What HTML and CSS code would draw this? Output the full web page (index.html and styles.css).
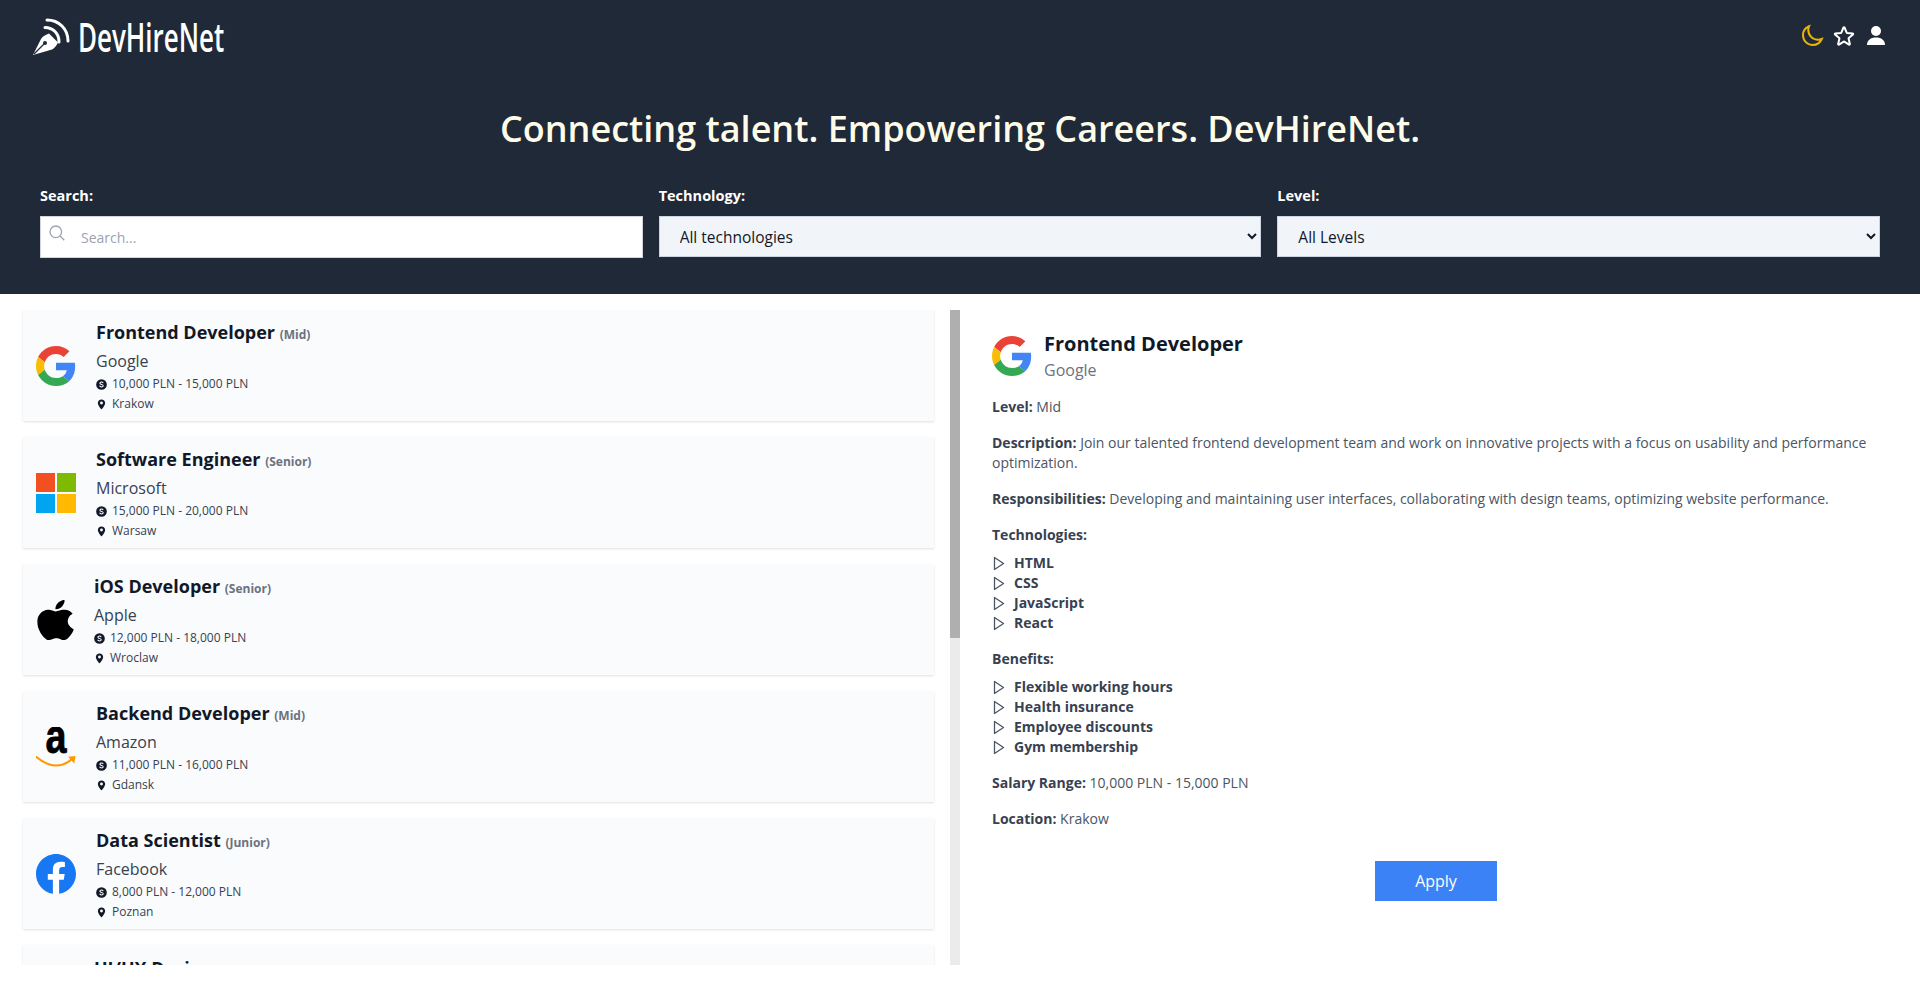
FILE: index.html
```html
<!DOCTYPE html>
<html lang="en">
<head>
    <meta charset="UTF-8">
    <title>DevHireNet</title>
    <link rel="stylesheet" href="styles.css">
</head>
<body>
    <svg class="sprites" width="0" height="0">
        <symbol id="g-logo" viewBox="0 0 48 48">
            <path fill="#EA4335" d="M24 9.5c3.54 0 6.71 1.22 9.21 3.6l6.85-6.85C35.9 2.38 30.47 0 24 0 14.62 0 6.51 5.38 2.56 13.22l7.98 6.19C12.43 13.72 17.74 9.5 24 9.5z"/>
            <path fill="#4285F4" d="M46.98 24.55c0-1.57-.15-3.09-.38-4.55H24v9.02h12.94c-.58 2.96-2.26 5.48-4.78 7.18l7.73 6c4.51-4.18 7.09-10.36 7.09-17.65z"/>
            <path fill="#FBBC05" d="M10.53 28.59c-.48-1.45-.76-2.99-.76-4.59s.27-3.14.76-4.59l-7.98-6.19C.92 16.46 0 20.12 0 24c0 3.88.92 7.54 2.56 10.78l7.97-6.19z"/>
            <path fill="#34A853" d="M24 48c6.48 0 11.93-2.13 15.89-5.81l-7.73-6c-2.15 1.45-4.92 2.3-8.16 2.3-6.26 0-11.57-4.22-13.47-9.91l-7.98 6.19C6.51 42.62 14.62 48 24 48z"/>
        </symbol>
        <symbol id="dollar" viewBox="0 0 12 12">
            <circle cx="6" cy="6" r="5.8" fill="#111827"/>
            <path d="M7.9 4.5C7.5 3.700 6.800 3.400 6 3.400c-1 0-1.800.5-1.800 1.300 0 1.700 3.700.8 3.700 2.600 0 .8-.9 1.300-1.900 1.300-.9 0-1.700-.4-2.100-1.200" fill="none" stroke="#fff" stroke-width="1.100"/>
        </symbol>
        <symbol id="pin" viewBox="0 0 12 12">
            <path fill="#111827" fill-rule="evenodd" d="M6 .5C3.700.5 2 2.200 2 4.400 2 7.200 6 11.500 6 11.500s4-4.300 4-7.100C10 2.200 8.300.5 6 .5zm0 5.500a1.600 1.600 0 1 1 0-3.200 1.600 1.600 0 0 1 0 3.200z"/>
        </symbol>
        <symbol id="arrow" viewBox="0 0 13 15">
            <path d="M2.500 1.500 11.500 7.500 2.500 13.500z" fill="none" stroke="#4b5563" stroke-width="1.300" stroke-linejoin="round"/>
        </symbol>
    </svg>

    <header class="header">
        <div class="topbar">
            <a class="brand" href="#">
                <svg class="brand-icon" viewBox="0 0 38 38">
                    <path fill="#fff" d="M1 38 9 22c1-2 4-4 8-5.500l9 9c-1.500 3.500-3.500 5.500-6 7z"/>
                    <path fill="none" stroke="#1f2937" stroke-width="1.200" d="M2 37 12 27"/>
                    <circle cx="13" cy="26" r="2" fill="#1f2937"/>
                    <path fill="none" stroke="#fff" stroke-width="3" stroke-linecap="round" d="M13 10.500c8 0 14 6 14 14.500"/>
                    <path fill="none" stroke="#fff" stroke-width="3" stroke-linecap="round" d="M15 3c12 0 21 9 21 21"/>
                </svg>
                <span class="brand-name">DevHireNet</span>
            </a>
            <div class="top-icons">
                <svg class="icon-moon" viewBox="0 0 24 24"><path d="M21.752 15.002A9.718 9.718 0 0118 15.750c-5.385 0-9.750-4.365-9.750-9.750 0-1.330.266-2.597.748-3.752A9.753 9.753 0 003 11.250C3 16.635 7.365 21 12.750 21a9.753 9.753 0 009.002-5.998z"/></svg>
                <svg class="icon-star" viewBox="0 0 24 24"><path d="M11.480 3.499a.562.562 0 011.040 0l2.125 5.111a.563.563 0 00.475.345l5.518.442c.499.040.701.663.321.988l-4.204 3.602a.563.563 0 00-.182.557l1.285 5.385a.562.562 0 01-.840.610l-4.725-2.885a.562.562 0 00-.586 0L6.982 20.540a.562.562 0 01-.840-.610l1.285-5.386a.562.562 0 00-.182-.557l-4.204-3.602a.563.563 0 01.321-.988l5.518-.442a.563.563 0 00.475-.345L11.480 3.500z"/></svg>
                <svg class="icon-user" viewBox="-2 -2 24 24"><circle cx="10" cy="5" r="5"/><path d="M1 19c0-5 3.800-7.500 9-7.500s9 2.500 9 7.500z"/></svg>
            </div>
        </div>

        <h1 class="tagline">Connecting talent. Empowering Careers. DevHireNet.</h1>

        <form class="filters">
            <div class="filter">
                <label for="search">Search:</label>
                <div class="search-box">
                    <svg class="search-icon" viewBox="0 0 16 16"><circle cx="6.800" cy="6.800" r="5.800"/><path d="M11 11l4.300 4.300"/></svg>
                    <input type="text" id="search" placeholder="Search...">
                </div>
            </div>
            <div class="filter">
                <label for="tech">Technology:</label>
                <select id="tech">
                    <option>All technologies</option>
                </select>
            </div>
            <div class="filter">
                <label for="level">Level:</label>
                <select id="level">
                    <option>All Levels</option>
                </select>
            </div>
        </form>
    </header>

    <main class="main">
        <div class="job-list">
            <div class="card">
                <svg class="logo"><use href="#g-logo"/></svg>
                <div class="card-body">
                    <h2>Frontend Developer <small>(Mid)</small></h2>
                    <p class="company">Google</p>
                    <p class="meta"><svg><use href="#dollar"/></svg>10,000 PLN - 15,000 PLN</p>
                    <p class="meta"><svg><use href="#pin"/></svg>Krakow</p>
                </div>
            </div>
            <div class="card">
                <svg class="logo" viewBox="0 0 40 40">
                    <rect width="19" height="19" fill="#F25022"/>
                    <rect x="21" width="19" height="19" fill="#7FBA00"/>
                    <rect y="21" width="19" height="19" fill="#00A4EF"/>
                    <rect x="21" y="21" width="19" height="19" fill="#FFB900"/>
                </svg>
                <div class="card-body">
                    <h2>Software Engineer <small>(Senior)</small></h2>
                    <p class="company">Microsoft</p>
                    <p class="meta"><svg><use href="#dollar"/></svg>15,000 PLN - 20,000 PLN</p>
                    <p class="meta"><svg><use href="#pin"/></svg>Warsaw</p>
                </div>
            </div>
            <div class="card">
                <svg class="logo logo-apple" viewBox="1 0 13.600 16" preserveAspectRatio="none">
                    <path fill="#000" d="M11.182.008C11.148-.03 9.923.023 8.857 1.180c-1.066 1.156-.902 2.482-.878 2.516.024.034 1.520.087 2.475-1.258.955-1.345.762-2.391.728-2.430zm3.314 11.733c-.048-.096-2.325-1.234-2.113-3.422.212-2.189 1.675-2.789 1.698-2.854.023-.065-.597-.790-1.254-1.157a3.692 3.692 0 0 0-1.563-.434c-.108-.003-.483-.095-1.254.116-.508.139-1.653.589-1.968.607-.316.018-1.256-.522-2.267-.665-.647-.125-1.333.131-1.824.328-.490.196-1.422.754-2.074 2.237-.652 1.482-.311 3.830-.067 4.560.244.729.625 1.924 1.273 2.796.576.984 1.340 1.667 1.659 1.899.319.232 1.219.386 1.843.067.502-.308 1.408-.485 1.766-.472.357.013 1.061.154 1.782.539.571.197 1.111.115 1.652-.105.541-.221 1.324-1.059 2.238-2.758.347-.790.505-1.217.473-1.282z"/>
                </svg>
                <div class="card-body">
                    <h2>iOS Developer <small>(Senior)</small></h2>
                    <p class="company">Apple</p>
                    <p class="meta"><svg><use href="#dollar"/></svg>12,000 PLN - 18,000 PLN</p>
                    <p class="meta"><svg><use href="#pin"/></svg>Wroclaw</p>
                </div>
            </div>
            <div class="card">
                <svg class="logo" viewBox="0 0 40 40">
                    <text class="amazon-a" x="26" y="26" text-anchor="middle" transform="scale(.77 1)">a</text>
                    <path d="M0.500 30C8 36 14 38.500 20 38.500 27 38.500 32 36 37 31" fill="none" stroke="#F90" stroke-width="2" stroke-linecap="round"/>
                    <path d="M32 29.800 39.500 29 38.300 36.500z" fill="#F90"/>
                </svg>
                <div class="card-body">
                    <h2>Backend Developer <small>(Mid)</small></h2>
                    <p class="company">Amazon</p>
                    <p class="meta"><svg><use href="#dollar"/></svg>11,000 PLN - 16,000 PLN</p>
                    <p class="meta"><svg><use href="#pin"/></svg>Gdansk</p>
                </div>
            </div>
            <div class="card">
                <svg class="logo" viewBox="0 0 40 40">
                    <circle cx="20" cy="20" r="19" fill="#fff"/>
                    <path fill="#1877F2" d="M40 20C40 8.950 31.050 0 20 0S0 8.950 0 20c0 9.980 7.310 18.250 16.880 19.750V25.780h-5.080V20h5.080v-4.410c0-5.010 2.980-7.780 7.550-7.780 2.190 0 4.480.390 4.480.390v4.920h-2.520c-2.490 0-3.260 1.540-3.260 3.120V20h5.550l-.890 5.780h-4.660v13.970C32.690 38.250 40 29.980 40 20z"/>
                </svg>
                <div class="card-body">
                    <h2>Data Scientist <small>(Junior)</small></h2>
                    <p class="company">Facebook</p>
                    <p class="meta"><svg><use href="#dollar"/></svg>8,000 PLN - 12,000 PLN</p>
                    <p class="meta"><svg><use href="#pin"/></svg>Poznan</p>
                </div>
            </div>
            <div class="card card-cut">
                <div class="logo logo-apple"></div>
                <div class="card-body">
                    <h2>UI/UX Designer</h2>
                </div>
            </div>
        </div>
        <div class="scrollbar"><div class="scrollbar-thumb"></div></div>

        <section class="details">
            <div class="details-head">
                <svg class="logo"><use href="#g-logo"/></svg>
                <div>
                    <h2>Frontend Developer</h2>
                    <p class="details-company">Google</p>
                </div>
            </div>
            <p><b>Level:</b> Mid</p>
            <p><b>Description:</b> Join our talented frontend development team and work on innovative projects with a focus on usability and performance optimization.</p>
            <p><b>Responsibilities:</b> Developing and maintaining user interfaces, collaborating with design teams, optimizing website performance.</p>
            <p class="list-title"><b>Technologies:</b></p>
            <ul>
                <li><svg><use href="#arrow"/></svg>HTML</li>
                <li><svg><use href="#arrow"/></svg>CSS</li>
                <li><svg><use href="#arrow"/></svg>JavaScript</li>
                <li><svg><use href="#arrow"/></svg>React</li>
            </ul>
            <p class="list-title"><b>Benefits:</b></p>
            <ul>
                <li><svg><use href="#arrow"/></svg>Flexible working hours</li>
                <li><svg><use href="#arrow"/></svg>Health insurance</li>
                <li><svg><use href="#arrow"/></svg>Employee discounts</li>
                <li><svg><use href="#arrow"/></svg>Gym membership</li>
            </ul>
            <p><b>Salary Range:</b> 10,000 PLN - 15,000 PLN</p>
            <p><b>Location:</b> Krakow</p>
            <div class="apply-row">
                <button type="button">Apply</button>
            </div>
        </section>
    </main>
</body>
</html>
```

FILE: styles.css
```css
* {
    box-sizing: border-box;
}
body {
    margin: 0;
    background: #fff;
    color: #374151;
    font-family: "Open Sans", sans-serif;
    font-size: 14px;
    line-height: 20px;
    overflow: hidden;
}
p, h1, h2, ul {
    margin: 0;
    padding: 0;
}
.sprites {
    position: absolute;
}

/* header */
.header {
    height: 294px;
    background-color: #1f2937;
    color: #fff;
    padding: 16px 40px 0;
}
.topbar {
    display: flex;
    justify-content: space-between;
    align-items: flex-start;
    margin-left: -8px;
}
.brand {
    display: flex;
    align-items: center;
    gap: 8px;
    height: 40px;
    color: #fff;
    text-decoration: none;
}
.brand-icon {
    width: 38px;
    height: 38px;
}
.brand-name {
    display: inline-block;
    margin-top: 2px;
    font-size: 39px;
    line-height: 44px;
    font-weight: 600;
    transform: scaleX(0.665);
    transform-origin: left center;
}
.top-icons {
    display: flex;
    align-items: center;
    gap: 8px;
    height: 40px;
    margin-right: -8px;
}
.top-icons svg {
    width: 24px;
    height: 24px;
}
.icon-moon {
    fill: none;
    stroke: #eab308;
    stroke-width: 2;
}
.icon-star {
    fill: none;
    stroke: #fff;
    stroke-width: 2;
}
.icon-user {
    fill: #fff;
}
.tagline {
    margin-top: 51px;
    text-align: center;
    color: #fefce8;
    font-size: 36px;
    line-height: 44px;
    font-weight: 600;
}
.filters {
    display: grid;
    grid-template-columns: repeat(3, 1fr);
    gap: 16px;
    margin-top: 35px;
}
.filter label {
    display: block;
    font-size: 14.5px;
    font-weight: 700;
    margin-bottom: 10px;
}
.search-box {
    position: relative;
}
.search-icon {
    position: absolute;
    left: 9px;
    top: 9px;
    width: 16px;
    height: 16px;
    fill: none;
    stroke: #9ca3af;
    stroke-width: 1.300;
}
.search-box input {
    display: block;
    width: 100%;
    height: 42px;
    border: 1px solid #d1d5db;
    padding: 0 16px 0 40px;
    font: inherit;
    background: #fff;
}
.search-box input::placeholder {
    color: #9ca3af;
}
.filter select {
    display: block;
    width: 100%;
    height: 41px;
    border: 1px solid #cbd5e1;
    padding: 0 16px;
    font: inherit;
    font-size: 15.500px;
    color: #111827;
    background-color: #f1f5f9;
    border-radius: 0;
}

/* job list */
.main {
    display: flex;
    height: 687px;
    padding: 16px 8px 16px 0;
}
.job-list {
    width: 950px;
    flex-shrink: 0;
    padding: 0 16px 0 23px;
    overflow: hidden;
}
.scrollbar {
    width: 10px;
    flex-shrink: 0;
    background: #ebebeb;
}
.scrollbar-thumb {
    height: 328px;
    background: #afafaf;
}
.card {
    display: flex;
    align-items: center;
    gap: 20px;
    height: 111px;
    margin-bottom: 16px;
    padding: 0 13px;
    background-color: #fafbfc;
    box-shadow: 0 1px 2px rgba(0, 0, 0, 0.12);
}
.card-cut {
    align-items: flex-start;
    padding-top: 9px;
}
.logo {
    width: 40px;
    height: 40px;
    flex-shrink: 0;
}
.logo-apple {
    width: 38px;
}
.amazon-a {
    font-family: "Liberation Sans", sans-serif;
    font-size: 49px;
    font-weight: 700;
    fill: #000;
    stroke: #000;
    stroke-width: 0.8;
}
.card-body {
    margin-top: 1px;
}
.card-cut .card-body {
    margin-top: 0;
}
.card h2 {
    color: #111827;
    font-size: 18px;
    line-height: 28px;
    font-weight: 700;
}
.card h2 small {
    color: #6b7280;
    font-size: 12px;
    font-weight: 700;
}
.company {
    margin-bottom: 1px;
    font-size: 16px;
    line-height: 24px;
}
.meta {
    display: flex;
    align-items: center;
    gap: 5px;
    font-size: 12px;
}
.meta svg {
    width: 11px;
    height: 11px;
}

/* details */
.details {
    flex: 1;
    padding: 20px 32px;
    color: #4b5563;
}
.details-head {
    display: flex;
    align-items: center;
    gap: 12px;
    margin-bottom: 15px;
}
.details-head h2 {
    color: #111827;
    font-size: 20px;
    line-height: 28px;
    font-weight: 700;
}
.details-company {
    font-size: 16px;
    line-height: 24px;
    color: #6b7280;
}
.details p {
    margin-bottom: 16px;
}
.details-head p.details-company {
    margin-bottom: 0;
}
.details b {
    color: #374151;
    font-weight: 700;
}
.details p.list-title {
    margin-bottom: 8px;
}
.details ul {
    list-style: none;
    margin-bottom: 16px;
}
.details li {
    display: flex;
    align-items: center;
    gap: 9px;
    color: #374151;
    font-weight: 700;
}
.details li svg {
    width: 13px;
    height: 15px;
}
.apply-row {
    display: flex;
    justify-content: center;
    margin-top: 32px;
}
.apply-row button {
    width: 122px;
    height: 40px;
    border: none;
    background-color: #3b82f6;
    color: #fff;
    font: inherit;
    font-size: 16px;
    cursor: pointer;
}
```
